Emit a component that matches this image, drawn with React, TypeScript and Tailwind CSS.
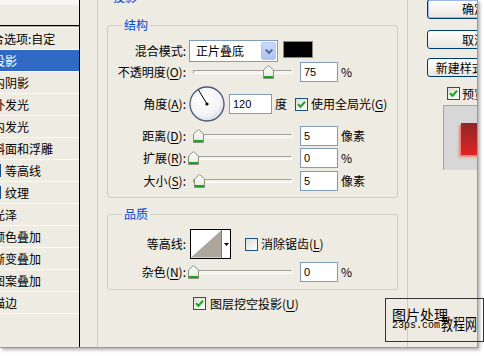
import React from "react";
import clsx from "clsx";

const cjk = "font-['Noto_Sans_CJK_SC','Noto_Sans_CJK_JP',sans-serif]";
const num = "font-['Liberation_Sans',sans-serif] text-[11px]";

function Check({ on = false }: { on?: boolean }) {
  return (
    <span className="flex h-[13px] w-[13px] shrink-0 items-center justify-center border border-[#1c5180] bg-linear-to-br from-[#dcdcd7] to-white">
      {on && (
        <svg width="9" height="9" viewBox="0 0 9 9">
          <path d="M1 4.2 L3.5 6.7 L8 1.8" fill="none" stroke="#21a121" strokeWidth="2" />
        </svg>
      )}
    </span>
  );
}

function Thumb() {
  return (
    <svg width="11" height="14" viewBox="0 0 11 14">
      <defs>
        <linearGradient id="thumb" x1="0" y1="0" x2="0" y2="1">
          <stop offset="0" stopColor="#ffffff" />
          <stop offset="1" stopColor="#e2e6dc" />
        </linearGradient>
      </defs>
      <path d="M0.5 5 L5.5 0.5 L10.5 5 V13.5 H0.5 Z" fill="url(#thumb)" stroke="#86917f" />
      <path d="M1 12 H10" stroke="#21a121" strokeWidth="2" />
    </svg>
  );
}

function Slider({ at }: { at: number }) {
  return (
    <div className="relative ml-[2px] h-[14px] w-[109px] shrink-0">
      <div className="absolute left-[5px] right-[5px] top-[5px] h-[4px] border border-[#a3a29a] border-b-white border-r-white bg-[#f3f2ed]" />
      <div className="absolute top-0" style={{ left: at }}>
        <Thumb />
      </div>
    </div>
  );
}

function Num({ v, wide = false }: { v: string; wide?: boolean }) {
  return (
    <div
      className={clsx(
        "flex h-[20px] shrink-0 items-center border border-[#7f9db9] bg-white pl-[3px] text-black",
        num,
        wide ? "w-[43px]" : "w-[38px]"
      )}
    >
      {v}
    </div>
  );
}

function Label({ children }: { children: React.ReactNode }) {
  return <div className="w-[78px] shrink-0 text-right">{children}</div>;
}

function U({ children }: { children: React.ReactNode }) {
  return <span className="underline underline-offset-2">{children}</span>;
}

function SliderRow({ label, at, v, unit, className }: { label: React.ReactNode; at: number; v: string; unit: string; className?: string }) {
  return (
    <div className={clsx("flex h-[20px] items-center", className)}>
      <Label>{label}</Label>
      <Slider at={at} />
      <div className="ml-[3px]">
        <Num v={v} />
      </div>
      <span className="ml-[3px]">{unit}</span>
    </div>
  );
}

function Btn({ children, primary = false, className }: { children: React.ReactNode; primary?: boolean; className?: string }) {
  return (
    <div
      className={clsx(
        "flex w-[94px] shrink-0 items-center justify-center rounded-[3px] border border-[#003c74] bg-linear-to-b from-white to-[#e8e6dd]",
        primary && "shadow-[inset_0_0_0_1px_#9db7e8]",
        className
      )}
    >
      {children}
    </div>
  );
}

const items: { t: string; kind: "opt" | "main" | "sub"; sel?: boolean }[] = [
  { t: "混合选项:自定", kind: "opt" },
  { t: "投影", kind: "main", sel: true },
  { t: "内阴影", kind: "main" },
  { t: "外发光", kind: "main" },
  { t: "内发光", kind: "main" },
  { t: "斜面和浮雕", kind: "main" },
  { t: "等高线", kind: "sub" },
  { t: "纹理", kind: "sub" },
  { t: "光泽", kind: "main" },
  { t: "颜色叠加", kind: "main" },
  { t: "渐变叠加", kind: "main" },
  { t: "图案叠加", kind: "main" },
  { t: "描边", kind: "main" },
];

export default function App() {
  return (
    <div className={clsx("relative h-[356px] w-[484px] overflow-hidden bg-white text-[12px] leading-none text-black", cjk)}>
      <div className="flex h-[348px] w-[478px] overflow-hidden border-b border-r border-[#9a9890] bg-[#eeebe2] shadow-[2px_2px_3px_rgba(0,0,0,0.3)]">
        {/* styles list */}
        <div className="w-[80px] shrink-0 overflow-hidden border-r border-black">
          <div className="h-[25px] border-t-[5px] border-t-[#f7f6f2]">
            <div className="-ml-[25px] pt-[4px] font-bold">样式</div>
          </div>
          <div className="h-px bg-black" />
          <div className="h-px bg-[#a8a69c]" />
          <div className="h-px bg-white" />
          {items.map((it) => (
            <div
              key={it.t}
              className={clsx(
                "flex h-[22px] items-center whitespace-nowrap border-b border-[#fbfaf6]",
                it.sel && "bg-[#316ac5] text-white"
              )}
            >
              <div
                className={clsx(
                  "-ml-[34px] flex shrink-0 items-center gap-[4px]",
                  it.kind === "opt" && "pl-[14px]",
                  it.kind === "main" && "pl-[10px]",
                  it.kind === "sub" && "pl-[22px]"
                )}
              >
                {it.kind !== "opt" && <Check on={it.sel} />}
                <span>{it.t}</span>
              </div>
            </div>
          ))}
        </div>

        {/* settings */}
        <div className="ml-[17px] w-[311px] shrink-0 border-l border-r border-[#cfcdbf]">
          <div className="-mt-[10px] ml-[15px] h-[14px] leading-[14px] text-[#0046d5]">投影</div>

          <fieldset className="mx-[9px] mt-[14px] rounded-[3px] border border-[#cfcdbf] pb-[6px] pt-[8px]">
            <legend className="ml-[14px] px-[2px] leading-[14px] text-[#0046d5]">结构</legend>
            <div className="flex h-[22px] items-center">
              <Label>混合模式:</Label>
              <div className="ml-[3px] flex h-[22px] w-[89px] shrink-0 items-center border border-[#7f9db9] bg-white pl-[6px]">
                <span className="flex-1">正片叠底</span>
                <span className="mr-px flex h-[18px] w-[15px] items-center justify-center rounded-[2px] border border-[#b4c8f6] bg-linear-to-b from-[#cbd9fc] to-[#aec3f3]">
                  <svg width="8" height="5" viewBox="0 0 8 5">
                    <path d="M0.7 0.7 L4 4 L7.3 0.7" stroke="#4d6185" strokeWidth="1.8" fill="none" />
                  </svg>
                </span>
              </div>
              <div className="mb-[4px] ml-[5px] h-[17px] w-[30px] border border-[#8a8a8a] bg-black" />
            </div>

            <SliderRow label={<>不透明度(<U>O</U>):</>} at={75} v="75" unit="%" />

            <div className="mt-[4px] flex h-[36px] items-center">
              <Label>
                角度(<U>A</U>):
              </Label>
              <svg className="ml-[3px] shrink-0" width="36" height="36" viewBox="0 0 36 36">
                <defs>
                  <radialGradient id="dial" cx="0.4" cy="0.35" r="0.7">
                    <stop offset="0" stopColor="#ffffff" />
                    <stop offset="0.7" stopColor="#f3f3f5" />
                    <stop offset="1" stopColor="#d6d9e2" />
                  </radialGradient>
                </defs>
                <circle cx="18" cy="18" r="17" fill="url(#dial)" stroke="#485a80" strokeWidth="1.3" />
                <line x1="18" y1="18" x2="9.5" y2="4" stroke="#000" strokeWidth="1" />
                <circle cx="18" cy="18" r="1.6" fill="#000" />
              </svg>
              <div className="ml-[4px]">
                <Num v="120" wide />
              </div>
              <span className="ml-[3px]">度</span>
              <span className="ml-[8px]">
                <Check on />
              </span>
              <span className="ml-[3px]">
                使用全局光(<U>G</U>)
              </span>
            </div>

            <SliderRow className="mt-[4px]" label={<>距离(<U>D</U>):</>} at={5} v="5" unit="像素" />
            <SliderRow className="mt-[2px]" label={<>扩展(<U>R</U>):</>} at={0} v="0" unit="%" />
            <SliderRow className="mt-[3px]" label={<>大小(<U>S</U>):</>} at={6} v="5" unit="像素" />
          </fieldset>

          <fieldset className="mx-[9px] mt-[9px] rounded-[3px] border border-[#cfcdbf] pb-[7px] pt-[8px]">
            <legend className="ml-[14px] px-[2px] leading-[14px] text-[#0046d5]">品质</legend>
            <div className="flex h-[30px] items-center">
              <Label>等高线:</Label>
              <div className="ml-[4px] flex h-[30px] w-[41px] shrink-0 border border-black bg-white">
                <svg width="31" height="28" viewBox="0 0 31 28" className="border-r border-[#7a7a7a]">
                  <polygon points="0,28 31,0 31,28" fill="#aca69c" />
                </svg>
                <div className="flex flex-1 items-center justify-center">
                  <svg width="5" height="3" viewBox="0 0 5 3">
                    <path d="M0 0 H5 L2.5 3 Z" fill="#000" />
                  </svg>
                </div>
              </div>
              <span className="ml-[14px]">
                <Check />
              </span>
              <span className="ml-[3px]">
                消除锯齿(<U>L</U>)
              </span>
            </div>
            <SliderRow className="mt-[3px]" label={<>杂色(<U>N</U>):</>} at={0} v="0" unit="%" />
          </fieldset>

          <div className="ml-[95px] mt-[7px] flex items-center gap-[4px]">
            <Check on />
            <span>
              图层挖空投影(<U>U</U>)
            </span>
          </div>
        </div>

        {/* buttons */}
        <div className="ml-[19px] flex shrink-0 flex-col">
          <Btn primary className="-mt-px h-[20px]">确定</Btn>
          <Btn className="mt-[11px] h-[19px]">取消</Btn>
          <Btn className="mt-[9px] h-[19px]">新建样式(W)...</Btn>
          <div className="ml-[20px] mt-[10px] flex items-center gap-[2px]">
            <Check on />
            <span>预览(V)</span>
          </div>
          <div className="ml-[16px] mt-[5px] h-[65px] w-[68px] border-l border-t border-[#a4a4a4] bg-[#d7d7d7] pl-[17px] pt-[17px]">
            <div className="h-[32px] w-[32px] bg-linear-to-b from-[#8e2628] to-[#e32222] shadow-[-2px_2px_2px_rgba(240,120,100,0.9)]" />
          </div>
        </div>
      </div>

      {/* watermark */}
      <div className="absolute left-[385px] top-[298px] flex h-[44px] w-[99px] items-end border border-[#333] pb-[10px] pl-[6px]">
        <div className="flex w-[49px] shrink-0 flex-col">
          <span className="whitespace-nowrap text-[14px] leading-[14px]">图片处理</span>
          <span className="font-['Liberation_Mono',monospace] text-[10px] leading-[10px]">23ps.com</span>
        </div>
        <span className="inline-block origin-bottom scale-y-[1.35] text-[12px] leading-[12px]">教程网</span>
      </div>
    </div>
  );
}
